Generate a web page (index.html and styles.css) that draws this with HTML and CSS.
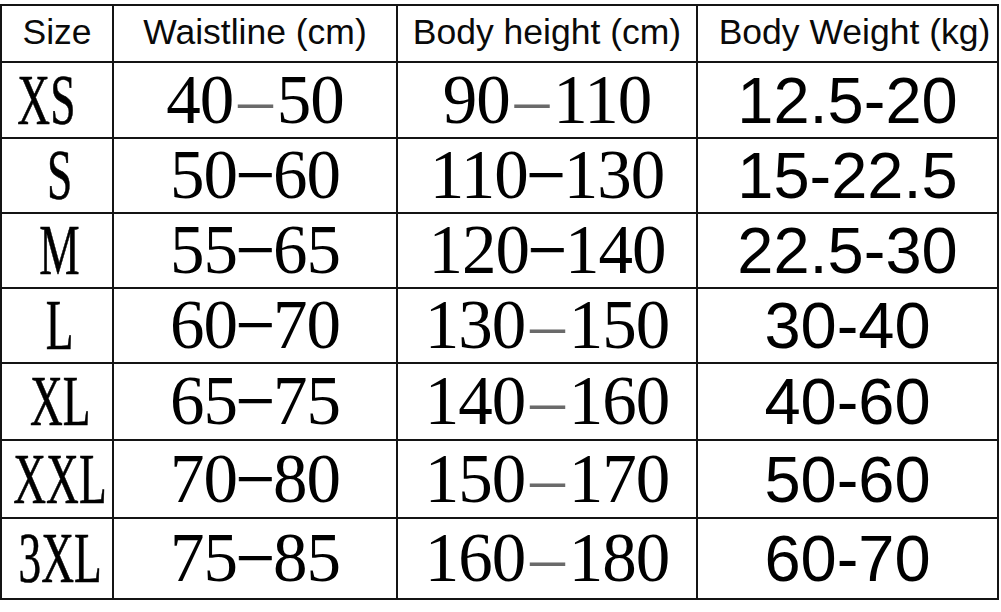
FILE: index.html
```html
<!DOCTYPE html>
<html lang="en">
<head>
<meta charset="utf-8">
<title>Size Chart</title>
<link rel="stylesheet" href="styles.css">
</head>
<body>
<div class="chart">
  <div class="cell head">Size</div>
  <div class="cell head">Waistline (cm)</div>
  <div class="cell head">Body height (cm)</div>
  <div class="cell head head-wide">Body Weight (kg)</div>

  <div class="cell size size-xs"><span class="narrow">XS</span></div>
  <div class="cell serif">40<span class="thin">–</span>50</div>
  <div class="cell serif">90<span class="thin">–</span>110</div>
  <div class="cell sans">12.5-20</div>

  <div class="cell size"><span class="narrow">S</span></div>
  <div class="cell serif">50<span class="thick">−</span>60</div>
  <div class="cell serif">110<span class="thick">−</span>130</div>
  <div class="cell sans">15-22.5</div>

  <div class="cell size"><span class="narrow">M</span></div>
  <div class="cell serif">55<span class="thick">−</span>65</div>
  <div class="cell serif">120<span class="thick">−</span>140</div>
  <div class="cell sans">22.5-30</div>

  <div class="cell size"><span class="narrow">L</span></div>
  <div class="cell serif">60<span class="thick">−</span>70</div>
  <div class="cell serif">130<span class="thin">–</span>150</div>
  <div class="cell sans">30-40</div>

  <div class="cell size"><span class="narrow">XL</span></div>
  <div class="cell serif">65<span class="thick">−</span>75</div>
  <div class="cell serif">140<span class="thin">–</span>160</div>
  <div class="cell sans">40-60</div>

  <div class="cell size"><span class="narrow">XXL</span></div>
  <div class="cell serif">70<span class="thick">−</span>80</div>
  <div class="cell serif">150<span class="thin">–</span>170</div>
  <div class="cell sans">50-60</div>

  <div class="cell size"><span class="narrow">3XL</span></div>
  <div class="cell serif">75<span class="thick">−</span>85</div>
  <div class="cell serif">160<span class="thin">–</span>180</div>
  <div class="cell sans">60-70</div>
</div>
</body>
</html>
```

FILE: styles.css
```css
html, body {
  margin: 0;
  padding: 0;
  background: #ffffff;
}

body {
  width: 1001px;
  height: 612px;
  overflow: hidden;
  padding-top: 4px;
  box-sizing: border-box;
  color: #000;
}

.chart {
  display: grid;
  grid-template-columns: 112px 284px 300px 301px;
  grid-template-rows: 57px 76px 75px 75px 75px 77px 78px 81px;
  width: 999px;
  box-sizing: border-box;
  border-left: 2px solid #141414;
  border-top: 2px solid #141414;
}

.cell {
  box-sizing: border-box;
  border-right: 2px solid #141414;
  border-bottom: 2px solid #141414;
  display: flex;
  align-items: center;
  justify-content: center;
  line-height: 1;
  white-space: nowrap;
}

.head {
  font-family: "Liberation Sans", Arial, sans-serif;
  font-size: 35.5px;
  padding-bottom: 2px;
  color: #0a0a0a;
}

.head-wide {
  padding-left: 14px;
}

.serif {
  font-family: "Liberation Serif", "Times New Roman", serif;
  font-size: 69px;
  letter-spacing: -1px;
}

.serif .thin {
  color: #6a6a6a;
  margin: 0 5px;
}

.serif .thick {
  margin: 0 -1px;
  -webkit-text-stroke: 0.8px #000;
}

.sans {
  font-family: "Liberation Sans", Arial, sans-serif;
  font-size: 65px;
}

.size {
  font-family: "Liberation Serif", "Times New Roman", serif;
  font-size: 71px;
  padding-left: 6px;
}

.size-xs {
  padding-left: 0;
  padding-right: 22px;
}

.narrow {
  display: inline-block;
  transform: scaleX(0.64);
  -webkit-text-stroke: 0.6px #000;
}
```
